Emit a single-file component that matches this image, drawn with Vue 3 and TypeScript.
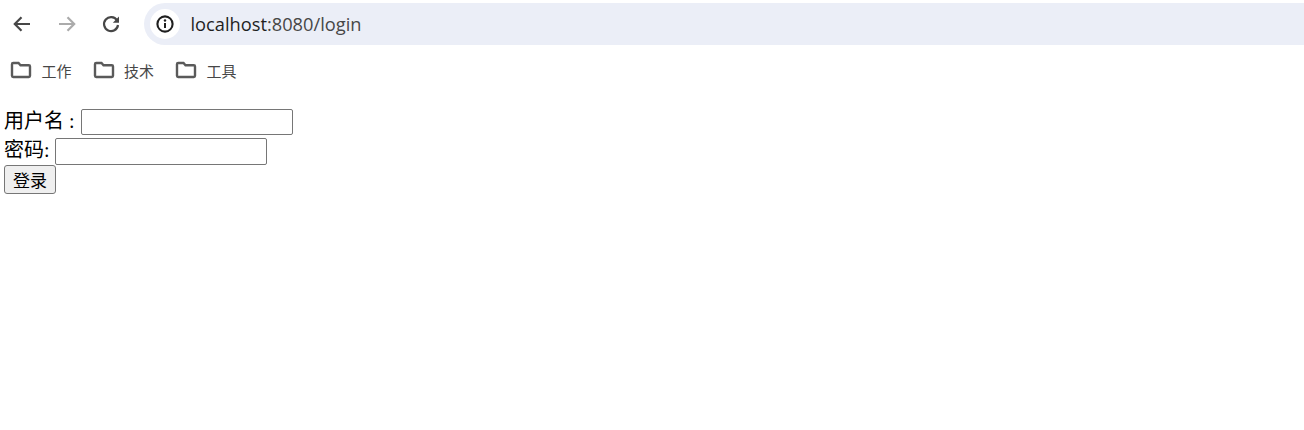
<template>
  <div class="browser">
    <header class="toolbar">
      <button class="nav-btn" aria-label="back">
        <svg width="24" height="24" viewBox="0 0 24 24"><path d="M20 12H5M11.5 5.200 4.800 12l6.700 6.800" fill="none" stroke="#474747" stroke-width="2.200" /></svg>
      </button>
      <button class="nav-btn" aria-label="forward">
        <svg width="24" height="24" viewBox="0 0 24 24"><path d="M4 12h15M12.500 5.200l6.700 6.800-6.700 6.800" fill="none" stroke="#ababab" stroke-width="2.200" /></svg>
      </button>
      <button class="nav-btn" aria-label="reload">
        <svg width="24" height="24" viewBox="0 0 24 24"><path d="M18 8.400A7 7 0 1 0 19 13" fill="none" stroke="#474747" stroke-width="2.200" /><path d="M20 4.500v6.200h-6.200z" fill="#474747" /></svg>
      </button>
      <div class="omnibox">
        <span class="site-info">
          <svg width="20" height="20" viewBox="0 0 20 20"><circle cx="10" cy="10" r="7.600" fill="none" stroke="#1f1f1f" stroke-width="2.100" /><path d="M10 9v5" stroke="#1f1f1f" stroke-width="2" /><circle cx="10" cy="6.500" r="1.200" fill="#1f1f1f" /></svg>
        </span>
        <span class="url">localhost<span class="url-rest">:8080/login</span></span>
      </div>
    </header>

    <nav class="bookmarks">
      <a v-for="b in bookmarks" :key="b" class="bookmark">
        <svg width="22" height="18" viewBox="0 0 22 18"><path d="M2 3.200c0-.7.500-1.200 1.200-1.200h5.300l2 2.200h8.300c.7 0 1.200.5 1.200 1.200v9.400c0 .7-.5 1.200-1.200 1.200H3.200c-.7 0-1.200-.5-1.200-1.200z" fill="none" stroke="#5a5a5a" stroke-width="2.400" /></svg>
        <span>{{ b }}</span>
      </a>
    </nav>

    <form class="login" @submit.prevent>
      <div class="row first-row"><label>用户名 : <input v-model="username" class="first" type="text" /></label></div>
      <div class="row"><label>密码: <input v-model="password" type="password" /></label></div>
      <button type="submit" class="submit">登录</button>
    </form>
  </div>
</template>

<script setup lang="ts">
import { ref } from 'vue';

const bookmarks: string[] = ['工作', '技术', '工具'];
const username = ref('');
const password = ref('');
</script>

<style scoped>
.browser {
  background: #fff;
  min-height: 430px;
}

.toolbar {
  display: flex;
  align-items: center;
  height: 48px;
  padding-left: 4px;
}

.nav-btn {
  width: 36px;
  height: 36px;
  margin-right: 8.500px;
  padding: 0;
  border: none;
  background: none;
  display: flex;
  align-items: center;
  justify-content: center;
}

.omnibox {
  flex: 1;
  height: 42px;
  margin-left: 6px;
  padding-left: 6px;
  display: flex;
  align-items: center;
  background: #ebeef7;
  border-radius: 21px 0 0 21px;
}

.site-info {
  width: 30px;
  height: 30px;
  border-radius: 50%;
  background: #fff;
  display: flex;
  align-items: center;
  justify-content: center;
  margin-right: 11px;
}

.url {
  font-family: "Open Sans", sans-serif;
  font-size: 18.250px;
  color: #1f1f1f;
  padding-bottom: 2px;
}

.url-rest {
  color: #474747;
}

.bookmarks {
  display: flex;
  height: 46px;
  padding-left: 10px;
  padding-bottom: 2px;
  box-sizing: border-box;
  gap: 21px;
  align-items: center;
}

.bookmark {
  display: flex;
  align-items: center;
  gap: 9.500px;
  font-family: "Noto Sans CJK SC", sans-serif;
  font-size: 15px;
  color: #474747;
}

.login {
  margin-top: 13px;
  padding-left: 4px;
  font-family: "Liberation Serif", "Noto Sans CJK SC", serif;
  font-size: 20px;
  line-height: 28px;
  color: #000;
}

.row {
  height: 28px;
}

.first-row {
  height: 29px;
}

.login input {
  width: 212px;
  height: 27px;
  box-sizing: border-box;
  border: 1px solid #767676;
  border-radius: 2px;
  padding: 1px 2px;
  vertical-align: 1px;
}

.login input.first {
  height: 26px;
  margin-left: 1px;
  vertical-align: 2px;
}

.submit {
  display: block;
  width: 52px;
  height: 29px;
  margin-top: 1px;
  padding: 0;
  border: 1px solid #767676;
  border-radius: 3px;
  background: #efefef;
  font-family: "Noto Sans CJK SC", sans-serif;
  font-size: 17px;
  color: #000;
}
</style>
